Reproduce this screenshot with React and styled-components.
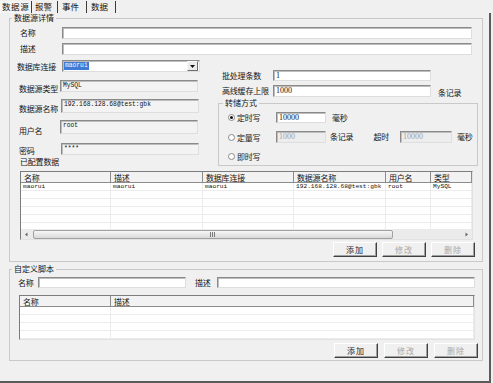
import React from 'react';
import styled, { createGlobalStyle } from 'styled-components';

const GlobalStyle = createGlobalStyle`
  html, body {
    margin: 0;
    padding: 0;
    background: #f0f0f0;
  }
  body {
    font-family: "Noto Sans CJK SC", "DejaVu Sans", sans-serif;
    font-size: 8px;
    color: #141414;
  }
  * { box-sizing: border-box; }
`;

const Window = styled.div`
  width: 493px;
  height: 383px;
  display: flex;
  flex-direction: column;
  background: #f0f0f0;
  overflow: hidden;
`;

const TabBar = styled.div`
  height: 13px;
  display: flex;
  align-items: flex-end;
`;

const Tab = styled.div`
  width: ${p => p.$w}px;
  height: 12px;
  padding-left: ${p => p.$pl}px;
  font-size: 8.5px;
  line-height: 11px;
  letter-spacing: ${p => (p.$active ? '0.6px' : '0')};
  border-right: 1px solid #3c3c3c;
  background: ${p => (p.$active ? '#f5f5f5' : 'transparent')};
  white-space: nowrap;
  overflow: hidden;
`;

const Panel = styled.div`
  width: 491px;
  height: 370px;
  border-right: 2px solid #5c5c5c;
  border-bottom: 2px solid #5c5c5c;
  display: flex;
  flex-direction: column;
`;

const Group = styled.fieldset`
  margin: ${p => p.$mt || 0}px 0 0 ${p => p.$ml || 0}px;
  width: ${p => p.$w}px;
  height: ${p => p.$h}px;
  padding: ${p => p.$pad};
  border: 1px solid #c9c9c9;
  min-width: 0;
  display: flex;
  flex-direction: column;
`;

const Legend = styled.legend`
  padding: 0 2px;
  margin-left: ${p => p.$ml || 0}px;
  font-size: 8px;
  line-height: 10px;
`;

const Row = styled.div`
  display: flex;
  align-items: ${p => p.$align || 'center'};
  height: ${p => (p.$h ? `${p.$h}px` : 'auto')};
  flex-shrink: 0;
  margin-top: ${p => p.$mt || 0}px;
  margin-left: ${p => p.$ml || 0}px;
`;

const Columns = styled.div`
  display: flex;
  align-items: flex-start;
  margin-top: ${p => p.$mt || 0}px;
`;

const Column = styled.div`
  width: ${p => p.$w}px;
  margin-left: ${p => p.$ml || 0}px;
  margin-top: ${p => p.$mt || 0}px;
  display: flex;
  flex-direction: column;
`;

const Label = styled.span`
  width: ${p => (p.$w ? `${p.$w}px` : 'auto')};
  flex-shrink: 0;
  padding-top: ${p => p.$pt || 0}px;
  padding-left: ${p => p.$pl || 0}px;
  margin-left: ${p => p.$ml || 0}px;
  letter-spacing: -0.2px;
  white-space: nowrap;
  line-height: 10px;
`;

const tones = {
  white: '#ffffff',
  read: '#f3f3f3',
  off: '#ededed',
};

const Field = styled.div`
  width: ${p => p.$w}px;
  height: ${p => p.$h || 12}px;
  flex-shrink: 0;
  margin-left: ${p => p.$ml || 0}px;
  background: ${p => tones[p.$tone || 'white']};
  border-style: solid;
  border-width: 1px;
  border-color: #8a8a8a #dedede #dedede #8a8a8a;
  box-shadow: inset 1px 1px 0 #bdbdbd;
  padding: 1px 2px 0;
  font-family: ${p => (p.$serif ? '"Liberation Serif", serif' : '"Liberation Mono", monospace')};
  font-size: ${p => (p.$serif ? '8px' : '6.3px')};
  line-height: 8px;
  color: ${p => (p.$dim ? '#a0a0a0' : '#111')};
  overflow: hidden;
  white-space: nowrap;
`;

const Combo = styled(Field)`
  display: flex;
  align-items: center;
  padding: 0 1px;
`;

const Selected = styled.span`
  background: #3d7bd4;
  color: #f4f8ff;
  height: 8px;
  line-height: 8px;
  padding: 0 1px;
`;

const DropButton = styled.div`
  margin-left: auto;
  width: 11px;
  height: 10px;
  border: 1px solid;
  border-color: #f8f8f8 #6c6c6c #6c6c6c #f8f8f8;
  background: #ececec;
  display: flex;
  align-items: center;
  justify-content: center;
`;

const RadioItem = styled.div`
  width: 48px;
  display: flex;
  align-items: center;
  flex-shrink: 0;
  letter-spacing: -0.2px;
`;

const RadioCircle = styled.span`
  width: 7px;
  height: 7px;
  border-radius: 50%;
  border: 1px solid #8a8a8a;
  background: #fff;
  display: flex;
  align-items: center;
  justify-content: center;
  margin-right: 2px;
  &::after {
    content: '';
    width: 3px;
    height: 3px;
    border-radius: 50%;
    background: ${p => (p.$checked ? '#111' : 'transparent')};
  }
`;

const TableBox = styled.div`
  margin: ${p => p.$mt || 0}px 0 0 ${p => p.$ml || 0}px;
  width: ${p => p.$w}px;
  flex-shrink: 0;
  border: 1px solid;
  border-color: #7c7c7c #e2e2e2 #e2e2e2 #7c7c7c;
  background: #fff;
  display: flex;
  flex-direction: column;
`;

const Grid = styled.div`
  display: grid;
  grid-template-columns: ${p => p.$cols};
`;

const Body = styled.div`
  height: ${p => p.$h}px;
  overflow: hidden;
`;

const HeadCell = styled.div`
  height: 11px;
  line-height: 11px;
  padding-left: 3px;
  background: #f2f2f2;
  border-right: 1px solid #8c8c8c;
  border-bottom: 1px solid #8c8c8c;
  letter-spacing: -0.2px;
  white-space: nowrap;
  overflow: hidden;
`;

const Cell = styled.div`
  height: 8px;
  line-height: 8px;
  padding-left: ${p => p.$pl || 2}px;
  border-right: 1px solid #ececec;
  border-bottom: 1px solid #ececec;
  font-family: "Liberation Mono", monospace;
  font-size: 6.2px;
  color: #111;
  white-space: nowrap;
  overflow: hidden;
`;

const Scrollbar = styled.div`
  height: 10px;
  display: flex;
  align-items: center;
  background: #ebebeb;
`;

const ScrollArrow = styled.div`
  width: 11px;
  height: 10px;
  display: flex;
  align-items: center;
  justify-content: center;
  margin-left: ${p => (p.$end ? 'auto' : '0')};
`;

const Thumb = styled.div`
  width: 360px;
  height: 9px;
  margin-left: 1px;
  border: 1px solid #a0a0a0;
  border-radius: 2px;
  background: linear-gradient(#f7f7f7, #d9d9d9);
  display: flex;
  align-items: center;
  justify-content: center;
`;

const ButtonBar = styled.div`
  display: flex;
  justify-content: flex-end;
  gap: ${p => p.$gap}px;
  margin-top: ${p => p.$mt}px;
  margin-right: ${p => p.$mr || 0}px;
`;

const Button = styled.div`
  width: 44px;
  height: 15px;
  display: flex;
  align-items: center;
  justify-content: center;
  background: #f0f0f0;
  border: 1px solid;
  border-color: #ffffff #404040 #404040 #ffffff;
  box-shadow: inset -1px -1px 0 #a0a0a0;
  color: ${p => (p.$disabled ? '#a8a8a8' : '#1c1c1c')};
  letter-spacing: 1px;
`;

const Arrow = ({ dir }) => (
  <svg width="5" height="5" viewBox="0 0 5 5">
    {dir === 'down' && <path d="M0 1 H5 L2.5 4 Z" fill="#111" />}
    {dir === 'left' && <path d="M3.5 0.5 V4.5 L1 2.5 Z" fill="#666" />}
    {dir === 'right' && <path d="M1.5 0.5 V4.5 L4 2.5 Z" fill="#666" />}
  </svg>
);

const Grip = () => (
  <svg width="6" height="5" viewBox="0 0 6 5">
    <path d="M0.5 0 V5 M2.5 0 V5 M4.5 0 V5" stroke="#7a7a7a" strokeWidth="1" />
  </svg>
);

const configured = [
  ['maorui', 'maorui', 'maorui', '192.168.128.68@test:gbk', 'root', 'MySQL'],
  ['', '', '', '', '', ''],
  ['', '', '', '', '', ''],
  ['', '', '', '', '', ''],
  ['', '', '', '', '', ''],
  ['', '', '', '', '', ''],
];

const dsCols = '90px 92px 91px 92px 45px 41px';
const dsHeads = ['名称', '描述', '数据库连接', '数据源名称', '用户名', '类型'];

const scriptCols = '91px 363px';

const App = () => (
  <Window>
    <GlobalStyle />
    <TabBar>
      <Tab $w={32} $pl={2} $active>数据源</Tab>
      <Tab $w={26} $pl={3}>报警</Tab>
      <Tab $w={29} $pl={4}>事件</Tab>
      <Tab $w={29} $pl={4}>数据</Tab>
    </TabBar>
    <Panel>
      <Group $ml={9} $w={474} $h={249} $pad="4px 10px 0 9px">
        <Legend $ml={-7}>数据源详情</Legend>
        <Row $h={12}>
          <Label $w={43} $pl={1}>名称</Label>
          <Field $w={410} $h={12} />
        </Row>
        <Row $h={12} $mt={4}>
          <Label $w={43} $pl={1}>描述</Label>
          <Field $w={410} $h={12} />
        </Row>

        <Columns $mt={5}>
          <Column $w={181}>
            <Row $h={12} $align="flex-start">
              <Label $w={43} $ml={-2} $pt={2}>数据库连接</Label>
              <Combo $w={138} $ml={2}>
                <Selected>maorui</Selected>
                <DropButton><Arrow dir="down" /></DropButton>
              </Combo>
            </Row>
            <Row $h={12} $mt={8} $align="flex-start">
              <Label $w={41} $pt={4}>数据源类型</Label>
              <Field $w={138} $tone="read">MySQL</Field>
            </Row>
            <Row $h={14} $mt={7} $align="flex-start">
              <Label $w={42} $pt={5}>数据源名称</Label>
              <Field $w={138} $h={14} $tone="read">192.168.128.68@test:gbk</Field>
            </Row>
            <Row $h={14} $mt={7} $align="flex-start">
              <Label $w={41} $pt={6}>用户名</Label>
              <Field $w={138} $h={14} $tone="read">root</Field>
            </Row>
            <Row $h={12} $mt={9} $align="flex-start">
              <Label $w={42} $pt={3}>密码</Label>
              <Field $w={138} $h={12} $tone="read">****</Field>
            </Row>
            <Row $h={12} $mt={1} $align="flex-start">
              <Label $pl={1} $pt={1}>已配置数据</Label>
            </Row>
          </Column>

          <Column $w={260} $ml={18} $mt={10}>
            <Row $h={11}>
              <Label $w={55} $pl={4}>批处理条数</Label>
              <Field $w={158} $h={11} $serif>1</Field>
            </Row>
            <Row $h={12} $mt={4}>
              <Label $w={55} $pl={4}>高线缓存上限</Label>
              <Field $w={158} $h={12} $serif>1000</Field>
              <Label $ml={7} $pt={3}>条记录</Label>
            </Row>
            <Group $w={260} $h={68} $mt={1} $pad="4px 0 0 9px">
              <Legend $ml={-5}>转储方式</Legend>
              <Row $h={11}>
                <RadioItem><RadioCircle $checked />定时写</RadioItem>
                <Field $w={50} $h={11} $serif>10000</Field>
                <Label $ml={6}>毫秒</Label>
              </Row>
              <Row $h={12} $mt={8}>
                <RadioItem><RadioCircle />定量写</RadioItem>
                <Field $w={50} $h={12} $serif $dim $tone="off">1000</Field>
                <Label $ml={4}>条记录</Label>
                <Label $ml={20}>超时</Label>
                <Field $w={52} $h={12} $ml={11} $serif $dim $tone="off">10000</Field>
                <Label $ml={5}>毫秒</Label>
              </Row>
              <Row $h={12} $mt={7}>
                <RadioItem><RadioCircle />即时写</RadioItem>
              </Row>
            </Group>
          </Column>
        </Columns>

        <TableBox $w={453} $ml={1} $mt={3}>
          <Grid $cols={dsCols}>
            {dsHeads.map(h => <HeadCell key={h}>{h}</HeadCell>)}
          </Grid>
          <Body $h={46}>
            {configured.map((row, i) => (
              <Grid $cols={dsCols} key={i}>
                {row.map((c, j) => <Cell key={j}>{c}</Cell>)}
              </Grid>
            ))}
          </Body>
          <Scrollbar>
            <ScrollArrow><Arrow dir="left" /></ScrollArrow>
            <Thumb><Grip /></Thumb>
            <ScrollArrow $end><Arrow dir="right" /></ScrollArrow>
          </Scrollbar>
        </TableBox>

        <ButtonBar $gap={5} $mt={2} $mr={-3}>
          <Button>添加</Button>
          <Button $disabled>修改</Button>
          <Button $disabled>删除</Button>
        </ButtonBar>
      </Group>

      <Group $ml={9} $mt={2} $w={474} $h={97} $pad="3px 0 0 8px">
        <Legend $ml={-6}>自定义脚本</Legend>
        <Row $h={11}>
          <Label $w={20}>名称</Label>
          <Field $w={148} $h={11} />
          <Label $w={22} $ml={9}>描述</Label>
          <Field $w={258} $h={11} />
        </Row>
        <TableBox $w={456} $ml={1} $mt={7}>
          <Grid $cols={scriptCols}>
            <HeadCell>名称</HeadCell>
            <HeadCell>描述</HeadCell>
          </Grid>
          <Body $h={32}>
            {[0, 1, 2, 3].map(i => (
              <Grid $cols={scriptCols} key={i}>
                <Cell />
                <Cell />
              </Grid>
            ))}
          </Body>
        </TableBox>
        <ButtonBar $gap={6} $mt={3} $mr={4}>
          <Button>添加</Button>
          <Button $disabled>修改</Button>
          <Button $disabled>删除</Button>
        </ButtonBar>
      </Group>
    </Panel>
  </Window>
);

export default App;
